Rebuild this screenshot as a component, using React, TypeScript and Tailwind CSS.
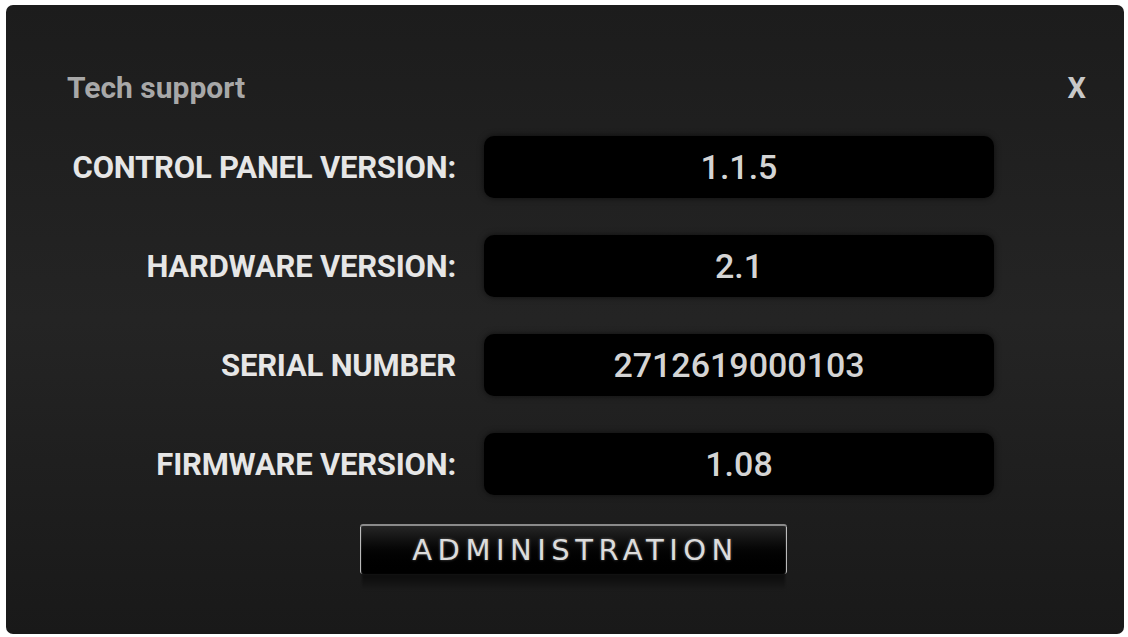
import React from 'react';

const ROWS = [
  { label: 'CONTROL PANEL VERSION:', value: '1.1.5' },
  { label: 'HARDWARE VERSION:', value: '2.1' },
  { label: 'SERIAL NUMBER', value: '2712619000103' },
  { label: 'FIRMWARE VERSION:', value: '1.08' },
];

const App: React.FC = () => {
  return (
    <div className="w-[1128px] h-[637px] bg-white pl-[6px] pr-[4px] pt-[5px] pb-[3px]" style={{ fontFamily: 'Roboto, "Liberation Sans", sans-serif' }}>
      <div className="w-full h-full rounded-[7px] bg-gradient-to-b from-[#1c1c1c] via-[#242424] to-[#191919] flex flex-col">
        {/* header */}
        <div className="flex items-center justify-between pl-[61px] pr-[38px] pt-[68px] h-[110px]">
          <h2 className="text-[30px] font-bold text-[#a8a8a8] leading-none pb-[12px]">Tech support</h2>
          <button className="text-[29px] font-bold text-[#c8c8c8] leading-none pb-[12px]">X</button>
        </div>

        {/* info rows */}
        <div className="flex flex-col gap-[37px] mt-[21px]">
          {ROWS.map((row) => (
            <div key={row.label} className="flex items-center h-[62px]">
              <div className="w-[450px] text-right text-[31px] font-bold text-[#e6e6e6] tracking-[-0.2px] leading-none">
                {row.label}
              </div>
              <div className="ml-[28px] w-[510px] h-[62px] rounded-[10px] bg-black shadow-[0_0_6px_rgba(0,0,0,0.6)] flex items-center justify-center">
                <span className="text-[34px] font-medium text-[#d4d4d4] leading-none">{row.value}</span>
              </div>
            </div>
          ))}
        </div>

        {/* admin button with reflection */}
        <div className="flex flex-col items-center mt-[29px] ml-[16px]">
          <button className="w-[427px] h-[50px] border-t-2 border-[#8a8a8a] rounded-[3px] bg-gradient-to-b from-[#262626] via-[#050505] to-[#000000] flex items-center justify-center shadow-[inset_2px_0_1px_-1px_#cfcfcf,inset_-2px_0_1px_-1px_#cfcfcf]">
            <span
              className="text-[29px] text-[#dcdcdc] tracking-[5.5px] leading-none pl-[5px] [text-shadow:0_0_3px_rgba(255,255,255,0.35)]"
              style={{ fontFamily: '"DejaVu Sans", "Liberation Sans", sans-serif' }}
            >
              ADMINISTRATION
            </span>
          </button>
          <div className="w-[423px] h-[16px] bg-gradient-to-b from-[#080808] to-[#1b1b1b] opacity-80 blur-[1px]" />
        </div>
      </div>
    </div>
  );
};

export default App;
